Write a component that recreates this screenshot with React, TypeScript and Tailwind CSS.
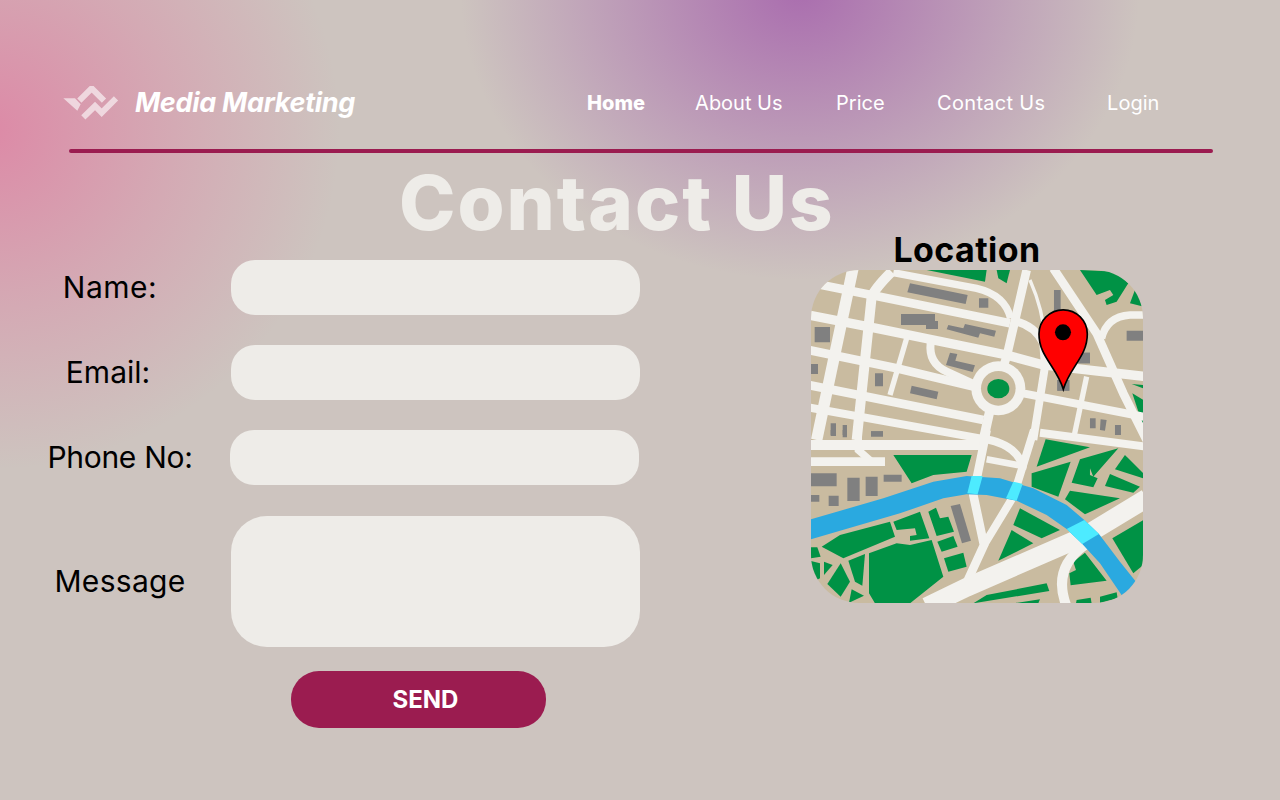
const ROAD = "#f3f2ee";
const BLOCK = "#c9bba0";
const GREEN = "#009245";
const GRAY = "#808080";

const navLinks = [
  { label: "Home", cls: "w-[108px] font-extrabold" },
  { label: "About Us", cls: "w-[141px]" },
  { label: "Price", cls: "w-[101px]" },
  { label: "Contact Us", cls: "w-[170px] tracking-[0.3px]" },
  { label: "Login", cls: "w-[100px]" },
];

// [width, path] in 3x crop coordinates
const topRoads: [number, string][] = [
  [34, "M160,20 L50,540"],
  [30, "M275,35 Q225,85 215,110 L170,540"],
  [26, "M50,72 L240,110 L630,190"],
  [22, "M280,38 L530,85 Q615,105 632,175"],
  [28, "M25,165 L230,205 L620,285 L730,315 L1040,350"],
  [26, "M25,270 L290,325 L520,380"],
  [24, "M670,400 L1040,472"],
  [26, "M25,375 L550,480"],
  [16, "M320,235 L270,405"],
  [24, "M392,250 Q385,310 440,335 L520,372"],
  [24, "M640,182 Q705,195 730,250 L735,320 L700,540"],
  [26, "M680,30 L620,290 L590,380"],
  [10, "M690,60 Q730,150 735,240"],
  [26, "M760,25 L890,220 L970,400 L1040,540"],
  [22, "M905,235 Q920,170 990,165 L1040,165"],
  [16, "M860,350 L820,540"],
  [28, "M570,450 L550,540"],
];

const bottomRoads: [number, string][] = [
  [30, "M25,45 L540,45"],
  [26, "M25,95 L255,95"],
  [22, "M175,0 L175,60 L215,95"],
  [24, "M25,-68 L540,25 Q650,40 668,110"],
  [24, "M720,8 L1040,50"],
  [26, "M560,0 L520,195 L552,345 L490,480"],
  [24, "M702,0 L640,200 L552,345"],
  [20, "M560,88 L680,110"],
  [56, "M380,530 L500,472 L850,320 L1040,205"],
  [30, "M800,530 Q755,415 855,345"],
];

const topGreens = [
  "380,30 560,30 555,65",
  "590,30 630,30 620,70 595,55",
  "840,30 950,35 985,70 950,125 920,135 915,120 940,105 930,90 890,105",
  "1030,90 1030,140 990,130 1005,90",
  "995,372 1030,375 1030,385",
  "997,400 1030,420 1030,500",
];

const bottomGreens = [
  "280,75 515,75 500,125 400,135 335,160",
  "737,28 870,52 710,110",
  "695,130 812,95 775,200 695,170",
  "840,88 955,55 880,140 870,115 870,135 893,145 880,172 815,158",
  "975,75 1030,130 1030,145 945,118",
  "930,132 1020,170 1000,188 915,168",
  "810,182 960,205 855,253 795,208",
  "660,235 780,300 725,325 640,285",
  "635,300 700,340 595,392",
  "1030,270 1030,405 1000,430 937,325",
  "820,395 855,368 920,452 812,466 808,430 828,420",
  "560,495 740,460 748,483 520,520",
  "640,520 720,508 715,520",
  "830,510 872,503 875,520 828,520",
  "900,500 950,487 953,505 900,518",
  "280,275 360,245 388,325 330,332 330,318 350,315 345,295 290,300",
  "385,245 408,233 420,265 445,260 462,305 410,318",
  "412,335 460,318 473,350 425,365",
  "432,385 490,368 500,410 445,425",
  "207,370 290,340 330,345 395,330 430,440 330,520 225,520 207,490",
  "65,350 120,315 270,275 285,320 130,385",
  "33,352 52,352 62,380 33,385",
  "33,393 60,400 60,445 50,450 33,420",
  "72,395 98,405 72,435",
  "122,400 150,455 122,500 82,462",
  "145,392 195,372 187,467 165,455",
  "155,478 192,497 147,518",
];

const topGrays = [
  "330,70 503,105 497,132 322,97",
  "537,115 565,115 565,143 537,143",
  "303,162 405,162 405,183 414,183 414,207 378,207 378,195 303,195",
  "44,201 90,201 90,247 44,247",
  "445,195 490,205 495,192 588,212 583,230 540,220 535,233 440,208",
  "980,212 1030,212 1030,242 980,242",
  "33,312 54,312 54,342 33,342",
  "450,278 472,282 466,302 525,316 518,336 438,315",
  "225,340 249,340 249,379 225,379",
  "335,377 415,395 410,418 330,400",
  "762,90 782,90 782,160 762,160",
  "835,278 870,278 870,310 835,310",
  "772,360 808,360 808,392 772,392",
  "870,475 887,475 887,505 870,505",
  "902,478 920,480 915,512 900,510",
  "945,495 963,495 963,525 945,525",
  "92,490 108,490 108,525 92,525",
  "128,495 141,495 141,525 128,525",
  "213,514 249,514 249,525 213,525",
];

const bottomGrays = [
  "33,130 110,130 110,169 33,169",
  "142,143 179,143 179,213 142,213",
  "197,140 233,140 233,198 197,198",
  "251,134 305,134 305,155 251,155",
  "33,195 58,195 58,215 33,215",
  "86,197 116,197 116,228 86,228",
  "452,228 480,222 513,332 486,340",
  "92,0 108,0 108,18 92,18",
  "128,0 141,0 141,22 128,22",
  "213,4 249,4 249,20 213,20",
];

const river =
  "25,270 250,205 400,155 500,138 600,145 700,175 800,225 853,270 897,312 960,395 1020,470 975,510 900,400 847,342 800,297 740,255 650,212 560,195 500,193 430,205 300,250 25,330";

function CityMap() {
  return (
    <svg viewBox="811 270 332 333" className="block w-[332px] h-[333px] rounded-[48px]">
      <rect x="811" y="270" width="332" height="333" fill={BLOCK} />
      <g transform="translate(800 430) scale(0.3333)">
        {bottomGreens.map((p) => (
          <polygon key={p} points={p} fill={GREEN} />
        ))}
        {bottomGrays.map((p) => (
          <polygon key={p} points={p} fill={GRAY} />
        ))}
        {bottomRoads.map(([w, d]) => (
          <path key={d} d={d} fill="none" stroke={ROAD} strokeWidth={w} />
        ))}
      </g>
      <g transform="translate(800 260) scale(0.3333)">
        {topGreens.map((p) => (
          <polygon key={p} points={p} fill={GREEN} />
        ))}
        {topGrays.map((p) => (
          <polygon key={p} points={p} fill={GRAY} />
        ))}
        {topRoads.map(([w, d]) => (
          <path key={d} d={d} fill="none" stroke={ROAD} strokeWidth={w} />
        ))}
        <circle cx="595" cy="385" r="81" fill={ROAD} />
        <circle cx="595" cy="385" r="52" fill={BLOCK} />
        <ellipse cx="595" cy="386" rx="33" ry="29" fill={GREEN} />
        {topGrays.slice(11, 13).map((p) => (
          <polygon key={p} points={p} fill={GRAY} />
        ))}
      </g>
      <g transform="translate(800 430) scale(0.3333)">
        <polygon points={river} fill="#2aa9e0" />
        <polygon points="515,138 548,138 533,193 502,190" fill="#4debff" />
        <polygon points="640,155 668,162 650,212 618,205" fill="#4debff" />
        <polygon points="800,297 853,270 897,312 847,342" fill="#4debff" />
      </g>
      <g transform="translate(800 260) scale(0.3333)">
        <path
          d="M790,388 C770,320 717,290 717,222 A72,72 0 1 1 862,222 C862,290 810,320 790,388Z"
          fill="#ff0000"
          stroke="#000"
          strokeWidth="5"
        />
        <circle cx="789" cy="217" r="24" fill="#000" />
      </g>
    </svg>
  );
}

function Logo() {
  return (
    <svg viewBox="0 0 57 36" className="mt-[1px] w-[57px] h-[36px] opacity-60">
      <g transform="translate(-23 -16) scale(0.3333)" fill="#fff">
        <polygon points="70,85 105,85 122,103 112,122" />
        <polyline points="118,92 155,55 192,92" fill="none" stroke="#fff" strokeWidth="18" />
        <polyline points="130,142 165,108 185,128 228,85" fill="none" stroke="#fff" strokeWidth="18" />
      </g>
    </svg>
  );
}

function Field({ label, labelCls, rowCls, boxCls }: { label: string; labelCls: string; rowCls: string; boxCls: string }) {
  return (
    <div className={`flex items-center ${rowCls}`}>
      <label className={`text-center text-[30px] text-black ${labelCls}`}>{label}</label>
      <div className={`w-[409px] bg-[#eeece8] ${boxCls}`} />
    </div>
  );
}

export default function App() {
  return (
    <div className="h-[800px] w-full overflow-hidden bg-[#cdc4bf] bg-[radial-gradient(ellipse_350px_340px_at_-10px_130px,rgba(228,110,155,0.68),rgba(228,110,155,0.32)_50%,rgba(228,110,155,0)_100%),radial-gradient(ellipse_340px_290px_at_800px_-10px,rgba(160,85,170,0.78),rgba(160,85,170,0.35)_55%,rgba(160,85,170,0)_100%)] font-['Inter','Liberation_Sans',sans-serif]">
      <header className="flex h-[149px] items-start pl-[63px] pt-[85px]">
        <Logo />
        <span className="ml-[15px] text-[27px] font-bold italic leading-[36px] tracking-[-0.3px] text-white">
          Media Marketing
        </span>
        <nav className="ml-[232px] flex h-[36px] items-center text-[20px] text-white">
          {navLinks.map((n) => (
            <a key={n.label} className={n.cls}>
              {n.label}
            </a>
          ))}
        </nav>
      </header>
      <div className="ml-[69px] h-1 w-[1144px] rounded-sm bg-[#9b1c50]" />

      <h1 className="h-[107px] pl-[399px] text-[76px] font-extrabold leading-[98px] tracking-[2px] text-[#eeece8]">Contact Us</h1>

      <div className="flex">
        <div className="w-[811px] flex flex-col">
          <Field label="Name:" labelCls="w-[231px] pr-[11px] tracking-[0.5px]" rowCls="h-[55px]" boxCls="h-[55px] rounded-[24px]" />
          <Field label="Email:" labelCls="w-[231px] pr-[15px]" rowCls="mt-[30px] h-[55px]" boxCls="h-[55px] rounded-[24px]" />
          <Field label="Phone No:" labelCls="w-[230px] pl-[10px] tracking-[-0.3px]" rowCls="mt-[30px] h-[55px]" boxCls="h-[55px] rounded-[24px]" />
          <Field label="Message" labelCls="w-[231px] pl-[9px] tracking-[0.3px]" rowCls="mt-[31px] h-[131px]" boxCls="h-[131px] rounded-[36px]" />
          <button className="ml-[291px] mt-[24px] h-[57px] w-[255px] rounded-[28px] bg-[#9b1c50] pl-[14px] text-center text-[24px] font-bold text-white">
            SEND
          </button>
        </div>
        <div className="-mt-[29px] flex w-[332px] flex-col">
          <h2 className="h-[39px] pr-[20px] text-center text-[34px] font-bold leading-[38px] tracking-[0.4px] text-black">Location</h2>
          <CityMap />
        </div>
      </div>
    </div>
  );
}
